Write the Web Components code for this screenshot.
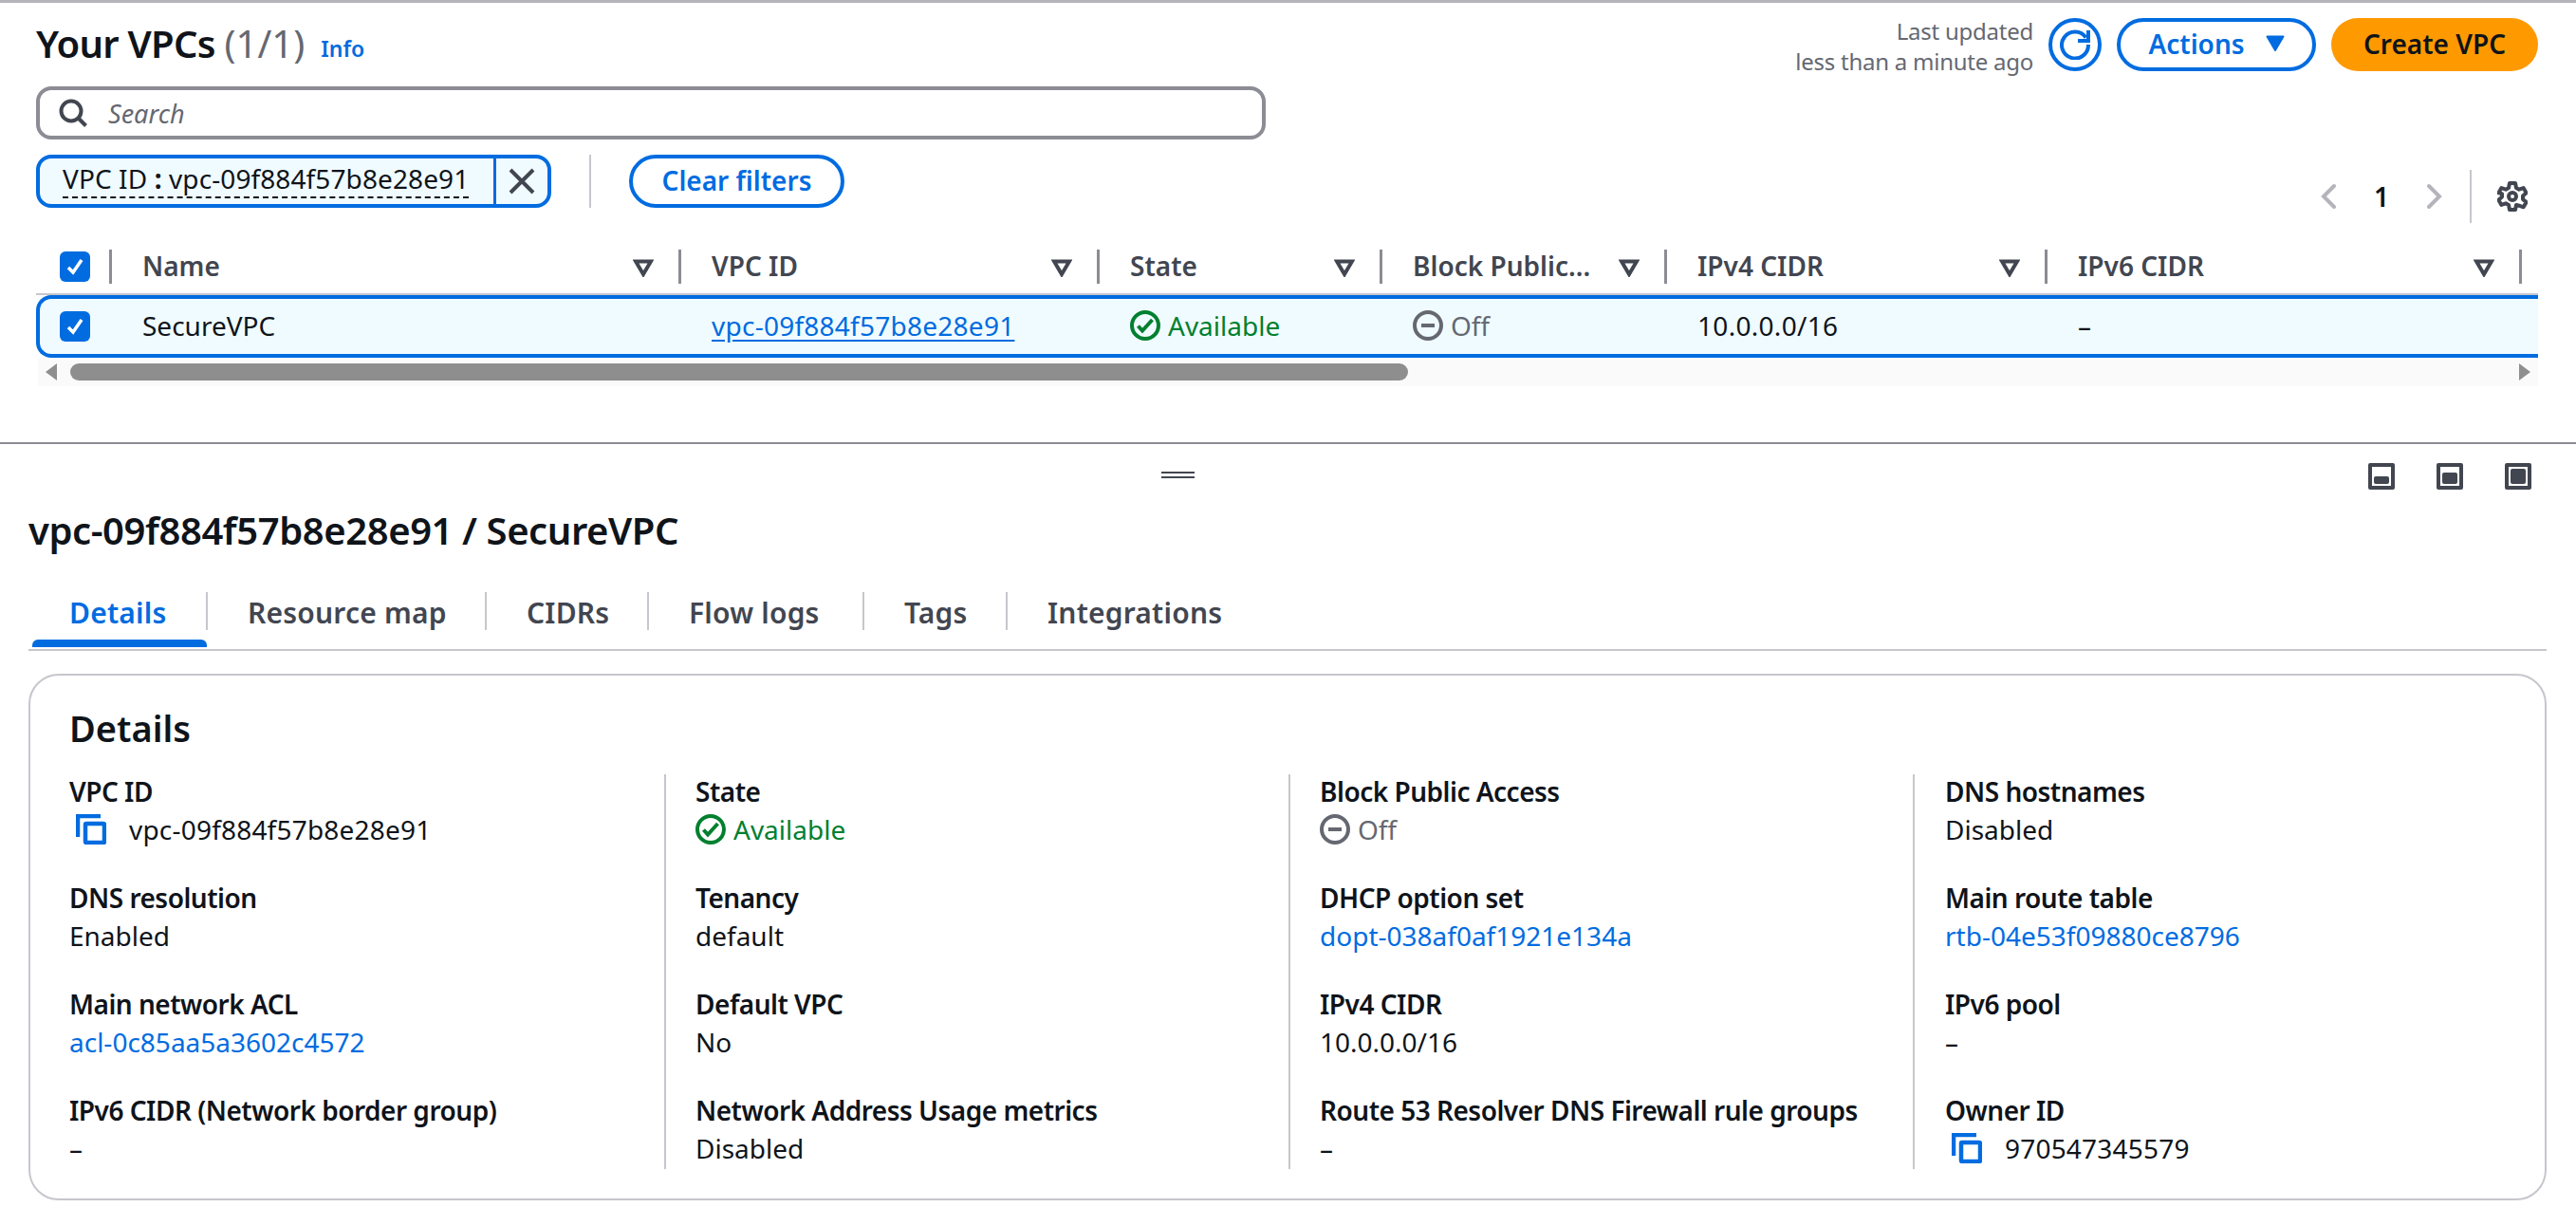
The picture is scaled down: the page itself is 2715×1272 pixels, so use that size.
<!DOCTYPE html>
<html>
<head>
<meta charset="utf-8">
<title>Your VPCs</title>
<style>
  body { margin: 0; background: #fff; font-family: "Noto Sans", sans-serif; font-size: 28px; color: #0f141a; }
</style>
</head>
<body>

<vpc-list-pane>
  <vpc-page-header></vpc-page-header>
  <vpc-search></vpc-search>
  <vpc-filter-bar></vpc-filter-bar>
  <vpc-table></vpc-table>
</vpc-list-pane>

<vpc-detail-pane>
  <vpc-split-bar></vpc-split-bar>
  <vpc-tabs></vpc-tabs>
  <vpc-detail-card>
    <vpc-field label="VPC ID"><vpc-copy>vpc-09f884f57b8e28e91</vpc-copy></vpc-field>
    <vpc-field label="State"><vpc-status kind="ok">Available</vpc-status></vpc-field>
    <vpc-field label="Block Public Access"><vpc-status kind="off">Off</vpc-status></vpc-field>
    <vpc-field label="DNS hostnames">Disabled</vpc-field>

    <vpc-field label="DNS resolution">Enabled</vpc-field>
    <vpc-field label="Tenancy">default</vpc-field>
    <vpc-field label="DHCP option set" link>dopt-038af0af1921e134a</vpc-field>
    <vpc-field label="Main route table" link>rtb-04e53f09880ce8796</vpc-field>

    <vpc-field label="Main network ACL" link>acl-0c85aa5a3602c4572</vpc-field>
    <vpc-field label="Default VPC">No</vpc-field>
    <vpc-field label="IPv4 CIDR">10.0.0.0/16</vpc-field>
    <vpc-field label="IPv6 pool">–</vpc-field>

    <vpc-field label="IPv6 CIDR (Network border group)">–</vpc-field>
    <vpc-field label="Network Address Usage metrics">Disabled</vpc-field>
    <vpc-field label="Route 53 Resolver DNS Firewall rule groups">–</vpc-field>
    <vpc-field label="Owner ID"><vpc-copy>970547345579</vpc-copy></vpc-field>
  </vpc-detail-card>
</vpc-detail-pane>

<script>
const BLUE = '#006ce0';
const CARET = '<svg width="22" height="20" viewBox="0 0 22 20" fill="none" stroke="#424650" stroke-width="4"><path d="M3 3.500h16L11 17z"/></svg>';
const TICK = '<svg width="20" height="20" viewBox="0 0 20 20" fill="none" stroke="#fff" stroke-width="3.5"><path d="M3 11l5 5 9-13"/></svg>';

function define(name, html, init) {
  customElements.define(name, class extends HTMLElement {
    constructor() {
      super();
      this.attachShadow({ mode: 'open' }).innerHTML = html;
    }
    connectedCallback() { if (init) init(this); }
  });
}

define('vpc-list-pane', `
  <style>
    :host { display: block; height: 468px; box-sizing: border-box; border-top: 3px solid #b4b4bb; border-bottom: 2px solid #8c8c94; padding: 16px 40px 0 38px; }
  </style>
  <slot></slot>`);

define('vpc-page-header', `
  <style>
    :host { display: flex; align-items: center; height: 56px; }
    h1 { margin: 0; font-size: 40px; line-height: 56px; font-weight: 600; white-space: nowrap; position: relative; top: -1px; letter-spacing: -0.7px; }
    h1 span { font-weight: 400; color: #656871; letter-spacing: 0; }
    .info { font-size: 23px; font-weight: 600; color: ${BLUE}; margin-left: 17px; margin-top: 8px; }
    .right { margin-left: auto; display: flex; align-items: center; gap: 16px; }
    .updated { font-size: 24px; line-height: 32px; color: #656871; text-align: right; letter-spacing: -0.25px; padding-top: 3px; }
    .round { box-sizing: border-box; width: 56px; height: 56px; border: 4px solid ${BLUE}; border-radius: 50%; display: flex; align-items: center; justify-content: center; }
    .btn { box-sizing: border-box; height: 56px; border-radius: 28px; font-size: 28px; font-weight: 600; display: flex; align-items: center; justify-content: center; white-space: nowrap; padding-bottom: 2px; }
    .actions { width: 210px; border: 4px solid ${BLUE}; color: ${BLUE}; gap: 22px; }
    .create { width: 218px; background: #ff9900; color: #0f141a; }
  </style>
  <h1>Your VPCs <span>(1/1)</span></h1>
  <span class="info">Info</span>
  <div class="right">
    <div class="updated">Last updated<br>less than a minute ago</div>
    <div class="round">
      <svg width="32" height="32" viewBox="0 0 32 32" fill="none" stroke="${BLUE}" stroke-width="4"><path d="M27.5 8.5A14 14 0 1 0 30 16"/><path d="M30 1v11H19"/></svg>
    </div>
    <div class="btn actions">Actions
      <svg width="20" height="18" viewBox="0 0 20 18"><path d="M1.5 1.5h17L10 16z" fill="${BLUE}" stroke="${BLUE}" stroke-width="2" stroke-linejoin="round"/></svg>
    </div>
    <div class="btn create">Create VPC</div>
  </div>`);

define('vpc-search', `
  <style>
    :host { display: flex; align-items: center; box-sizing: border-box; width: 1296px; height: 56px; margin-top: 16px; border: 4px solid #8c8c94; border-radius: 16px; padding-left: 20px; gap: 22px; }
    span { font-size: 27px; font-style: italic; color: #656871; }
  </style>
  <svg width="30" height="30" viewBox="0 0 30 30" fill="none" stroke="#424650" stroke-width="4"><circle cx="13" cy="13" r="10.5"/><path d="M20.5 20.5l8 8"/></svg>
  <span>Search</span>`);

define('vpc-filter-bar', `
  <style>
    :host { display: flex; align-items: flex-start; height: 56px; margin-top: 16px; }
    .token { box-sizing: border-box; display: flex; width: 543px; height: 56px; border: 4px solid ${BLUE}; border-radius: 16px; background: #f0fbff; }
    .label { width: 478px; box-sizing: border-box; padding: 2px 0 0 24px; white-space: nowrap; font-size: 28px; line-height: 38px; }
    .label span { display: inline-block; border-bottom: 2px dashed #0f141a; line-height: 37px; letter-spacing: 0.1px; }
    .label b { font-weight: 700; }
    .close { flex: 1; border-left: 3px solid ${BLUE}; display: flex; align-items: center; justify-content: center; }
    .rule { width: 2px; height: 56px; background: #c6c6cd; margin: 0 40px; }
    .clear { box-sizing: border-box; width: 227px; height: 56px; border: 4px solid ${BLUE}; border-radius: 28px; color: ${BLUE}; font-weight: 600; display: flex; align-items: center; justify-content: center; padding-bottom: 2px; }
    .pages { margin-left: auto; margin-right: 11px; margin-top: 16px; height: 56px; display: flex; align-items: center; }
    .num { width: 32px; text-align: center; margin: 0 32px; font-weight: 600; }
    .sep { width: 2px; height: 56px; background: #c6c6cd; margin: 0 27px 0 29px; }
  </style>
  <div class="token">
    <div class="label"><span>VPC ID <b>:</b> vpc-09f884f57b8e28e91</span></div>
    <div class="close"><svg width="28" height="28" viewBox="0 0 28 28" stroke="#424650" stroke-width="4" fill="none"><path d="M2 2l24 24M26 2L2 26"/></svg></div>
  </div>
  <div class="rule"></div>
  <div class="clear">Clear filters</div>
  <div class="pages">
    <svg width="16" height="32" viewBox="0 0 16 32" fill="none" stroke="#b4b4bb" stroke-width="4" stroke-linecap="round"><path d="M14 5L3 16l11 11"/></svg>
    <span class="num">1</span>
    <svg width="16" height="32" viewBox="0 0 16 32" fill="none" stroke="#b4b4bb" stroke-width="4" stroke-linecap="round"><path d="M2 5l11 11L2 27"/></svg>
    <div class="sep"></div>
    <svg width="32" height="32" viewBox="0 0 32 32" fill="none" stroke="#424650" stroke-width="4" stroke-linejoin="round"><path d="M13 2h6l1 5 3 1.700 4.600-1.600 3 5.200-3.600 3.200v3.400l3.600 3.200-3 5.200-4.600-1.600L20 25l-1 5h-6l-1-5-3-1.700-4.600 1.600-3-5.200 3.600-3.200v-3.400L1.400 12.300l3-5.200L9 8.700 12 7z"/><circle cx="16" cy="16" r="4"/></svg>
  </div>`);

define('vpc-table', `
  <style>
    :host { display: block; margin-top: 44px; }
    .grid { display: grid; grid-template-columns: 80px 600px 441px 298px 300px 401px 500px 17px; }
    .head { height: 46px; border-bottom: 2px solid #c6c6cd; }
    .hc { position: relative; display: flex; align-items: center; height: 36px; padding: 0 0 2px 32px; font-weight: 600; color: #424650; white-space: nowrap; box-sizing: border-box; }
    .hc::after { content: ""; position: absolute; right: 0; top: 0; width: 3px; height: 36px; background: #8c8c94; }
    .hc > svg { position: absolute; right: 29px; top: 9px; }
    .head .sel { padding: 0 0 0 25px; }
    .box { width: 32px; height: 32px; border-radius: 6px; background: ${BLUE}; display: flex; align-items: center; justify-content: center; }
    .row { grid-template-columns: 76px 600px 441px 298px 300px 401px 500px 17px; box-sizing: border-box; height: 66px; border: solid ${BLUE}; border-width: 4px 0 4px 4px; border-radius: 16px 0 0 16px; background: #f0fbff; }
    .row .c { display: flex; align-items: center; height: 56px; padding-left: 32px; white-space: nowrap; }
    .row .sel { padding-left: 21px; height: 58px; }
    .row .num { letter-spacing: 0.3px; }
    a { color: ${BLUE}; text-decoration: underline; text-underline-offset: 4px; letter-spacing: 0.25px; }
    .bar { position: relative; height: 30px; background: #fafafa; margin-left: 2px; }
    .thumb { position: absolute; left: 34px; top: 6px; width: 1410px; height: 18px; border-radius: 9px; background: #8e8e8e; }
    .bar svg { position: absolute; top: 6px; }
  </style>
  <div class="grid head">
    <div class="hc sel"><span class="box">${TICK}</span></div>
    <div class="hc">Name${CARET}</div>
    <div class="hc">VPC ID${CARET}</div>
    <div class="hc">State${CARET}</div>
    <div class="hc">Block Public...${CARET}</div>
    <div class="hc">IPv4 CIDR${CARET}</div>
    <div class="hc">IPv6 CIDR${CARET}</div>
  </div>
  <div class="grid row">
    <div class="c sel"><span class="box">${TICK}</span></div>
    <div class="c">SecureVPC</div>
    <div class="c"><a>vpc-09f884f57b8e28e91</a></div>
    <div class="c"><vpc-status kind="ok">Available</vpc-status></div>
    <div class="c"><vpc-status kind="off">Off</vpc-status></div>
    <div class="c num">10.0.0.0/16</div>
    <div class="c">–</div>
  </div>
  <div class="bar">
    <svg style="left:7px" width="14" height="18" viewBox="0 0 14 18"><path d="M13 0v18L1 9z" fill="#8e8e8e"/></svg>
    <div class="thumb"></div>
    <svg style="right:7px" width="14" height="18" viewBox="0 0 14 18"><path d="M1 0v18l12-9z" fill="#8e8e8e"/></svg>
  </div>`);

define('vpc-status', `
  <style>
    :host { display: inline-flex; align-items: center; gap: 8px; }
    :host([kind=ok]) { color: #00802f; }
    :host([kind=off]) { color: #656871; }
    svg { flex: none; }
  </style>
  <svg width="32" height="32" viewBox="0 0 32 32" fill="none" stroke="currentColor" stroke-width="4"></svg>
  <slot></slot>`, el => {
    const svg = el.shadowRoot.querySelector('svg');
    const mark = el.getAttribute('kind') === 'ok' ? '<path d="M8.500 16.500l4.500 5 10.500-11.500"/>' : '<path d="M9 16h14"/>';
    svg.innerHTML = '<circle cx="16" cy="16" r="14"/>' + mark;
  });

define('vpc-copy', `
  <style>
    :host { display: inline-flex; align-items: center; gap: 24px; padding-left: 7px; letter-spacing: 0.2px; }
    svg { flex: none; }
  </style>
  <svg width="32" height="32" viewBox="0 0 32 32" fill="none" stroke="${BLUE}" stroke-width="4.500"><path d="M26 2H2v22"/><rect x="10" y="10" width="20" height="20" rx="1"/></svg>
  <slot></slot>`);

define('vpc-detail-pane', `
  <style>
    :host { display: block; padding: 0 31px 0 30px; }
  </style>
  <slot></slot>`);

define('vpc-split-bar', `
  <style>
    :host { display: block; position: relative; height: 66px; }
    .handle { width: 35px; height: 7px; border-top: 2px solid #424650; border-bottom: 2px solid #424650; box-sizing: border-box; margin: 0 auto; position: relative; top: 29px; left: -116px; }
    .modes { position: absolute; right: 16px; top: 20px; display: flex; gap: 44px; }
    .m { box-sizing: border-box; width: 28px; height: 28px; border: 4px solid #424650; border-radius: 2px; padding: 2px; display: flex; align-items: flex-end; }
    .m i { display: block; width: 100%; background: #424650; border-radius: 2px; }
  </style>
  <div class="handle"></div>
  <div class="modes">
    <div class="m"><i style="height:8px"></i></div>
    <div class="m"><i style="height:12px"></i></div>
    <div class="m"><i style="height:16px"></i></div>
  </div>`);

define('vpc-tabs', `
  <style>
    :host { display: block; }
    h2 { margin: 0; font-size: 40px; line-height: 48px; font-weight: 600; white-space: nowrap; position: relative; top: 1px; letter-spacing: -0.42px; }
    .tabs { display: flex; margin-top: 42px; height: 60px; border-bottom: 2px solid #c6c6cd; padding-left: 4px; position: relative; }
    .t { position: relative; box-sizing: border-box; height: 40px; display: flex; align-items: center; padding: 2px 0 0 42px; font-size: 30px; font-weight: 600; letter-spacing: 0.2px; color: #424650; border-right: 2px solid #c6c6cd; white-space: nowrap; }
    .t.last { border-right: 0; }
    .t.on { color: ${BLUE}; padding-left: 39px; }
    .t.on::after { content: ""; position: absolute; left: 0; right: -1px; top: 50px; height: 8px; background: ${BLUE}; border-radius: 6px 6px 0 0; }
  </style>
  <h2>vpc-09f884f57b8e28e91 / SecureVPC</h2>
  <div class="tabs">
    <div class="t on" style="width:185px">Details</div>
    <div class="t" style="width:294px">Resource map</div>
    <div class="t" style="width:171px">CIDRs</div>
    <div class="t" style="width:227px">Flow logs</div>
    <div class="t" style="width:151px">Tags</div>
    <div class="t last">Integrations</div>
  </div>`);

define('vpc-detail-card', `
  <style>
    :host { display: block; box-sizing: border-box; height: 555px; margin-top: 24px; border: 2px solid #c6c6cd; border-radius: 32px; padding: 31px 0 0 41px; }
    h3 { margin: 0; font-size: 38px; line-height: 48px; font-weight: 600; }
    .grid { display: grid; grid-template-columns: 660px 658px 659px 659px; margin-top: 25px; position: relative; }
    .sep { position: absolute; top: 0; bottom: 0; width: 2px; background: #c6c6cd; }
  </style>
  <h3>Details</h3>
  <div class="grid">
    <slot></slot>
    <div class="sep" style="left:627px"></div>
    <div class="sep" style="left:1285px"></div>
    <div class="sep" style="left:1943px"></div>
  </div>`);

define('vpc-field', `
  <style>
    :host { display: block; height: 112px; }
    :host(:nth-last-child(-n+4)) { height: 80px; }
    .l { font-weight: 600; line-height: 40px; white-space: nowrap; letter-spacing: -0.5px; margin-top: -2px; }
    .v { line-height: 40px; white-space: nowrap; height: 40px; display: flex; align-items: center; }
    :host([link]) .v { color: ${BLUE}; }
  </style>
  <div class="l"></div>
  <div class="v"><slot></slot></div>`, el => {
    el.shadowRoot.querySelector('.l').textContent = el.getAttribute('label');
  });
</script>
</body>
</html>
